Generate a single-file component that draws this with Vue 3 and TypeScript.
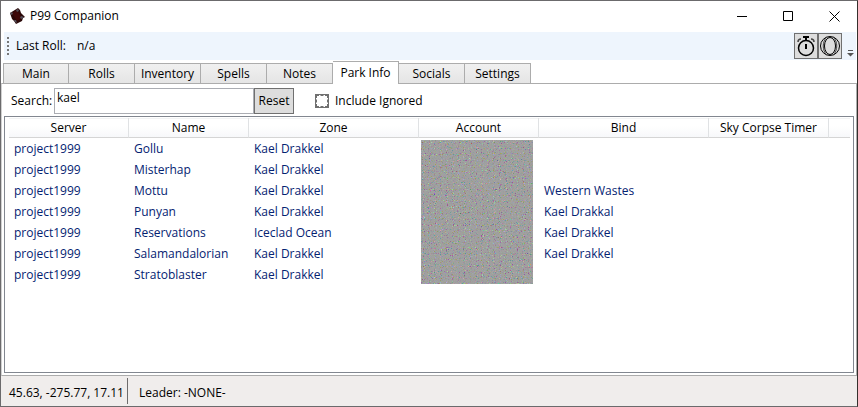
<script setup lang="ts">
import { computed, ref } from 'vue'

interface Character {
  server: string
  name: string
  zone: string
  bind: string
}

const tabs = ['Main', 'Rolls', 'Inventory', 'Spells', 'Notes', 'Park Info', 'Socials', 'Settings']
const activeTab = ref('Park Info')
const search = ref('kael')
const includeIgnored = ref(false)

const characters: Character[] = [
  { server: 'project1999', name: 'Gollu', zone: 'Kael Drakkel', bind: '' },
  { server: 'project1999', name: 'Misterhap', zone: 'Kael Drakkel', bind: '' },
  { server: 'project1999', name: 'Mottu', zone: 'Kael Drakkel', bind: 'Western Wastes' },
  { server: 'project1999', name: 'Punyan', zone: 'Kael Drakkel', bind: 'Kael Drakkal' },
  { server: 'project1999', name: 'Reservations', zone: 'Iceclad Ocean', bind: 'Kael Drakkel' },
  { server: 'project1999', name: 'Salamandalorian', zone: 'Kael Drakkel', bind: 'Kael Drakkel' },
  { server: 'project1999', name: 'Stratoblaster', zone: 'Kael Drakkel', bind: '' },
]

const rows = computed(() => {
  const term = search.value.toLowerCase()
  return characters.filter((c) => `${c.name} ${c.zone} ${c.bind}`.toLowerCase().includes(term))
})
</script>

<template>
  <div class="window">
    <header class="titlebar">
      <svg class="app-icon" width="16" height="16" viewBox="0 0 16 16" aria-hidden="true">
        <path d="M1 5 9 0l2 2 1 3 4 4-2 1-1 3-6 3-2-3-2-2-1-3z" fill="#2a0808" />
        <path d="M3 5 8 2l5 8-5 3z" fill="#3e0808" />
        <path d="M1 5l2-1 1 2-2 1zM8 1l2 1-1 2-2-1zM12 8l3 1-2 2-2-1zM5 12l2 0 1 3-2-1z" fill="#55505a" />
      </svg>
      <h1 class="title">P99 Companion</h1>
      <div class="captions">
        <button type="button" class="caption" aria-label="Minimize">
          <svg width="11" height="11" viewBox="0 0 11 11"><path d="M0 5.5h10" /></svg>
        </button>
        <button type="button" class="caption" aria-label="Maximize">
          <svg width="11" height="11" viewBox="0 0 11 11"><path d="M.5.5h9v9h-9z" /></svg>
        </button>
        <button type="button" class="caption" aria-label="Close">
          <svg width="11" height="11" viewBox="0 0 11 11"><path d="M.5.5l10 10M10.5.5l-10 10" /></svg>
        </button>
      </div>
    </header>

    <div class="toolbar">
      <span class="grip"></span>
      <span class="roll-label">Last Roll:</span>
      <span>n/a</span>
      <div class="tools">
        <button type="button" class="tool" aria-label="Timer">
          <svg width="22" height="24" viewBox="0 0 22 24" fill="none" stroke="#000">
            <circle cx="11" cy="14" r="7.5" stroke-width="1.5" />
            <path d="M8 3h6" stroke-width="2" />
            <path d="M11 3v4M11 10v5" stroke-width="2" />
            <path d="M3 8c0-2 1-3 3-3M19 8c0-2-1-3-3-3" stroke="#444" stroke-width="1.5" />
          </svg>
        </button>
        <button type="button" class="tool" aria-label="Ring">
          <svg width="22" height="24" viewBox="0 0 22 24" fill="none" stroke="#000">
            <circle cx="11" cy="12" r="9.5" />
            <ellipse cx="11" cy="12" rx="5.5" ry="8.5" />
            <path d="M8 3C3 7 3 17 8 21M14 3c5 4 5 14 0 18" stroke="#444" />
          </svg>
        </button>
      </div>
      <svg class="overflow" width="7" height="7" viewBox="0 0 7 7" aria-hidden="true">
        <path d="M1 .5h5" stroke="#555" />
        <path d="M0 3h7L3.5 6.5z" fill="#555" />
      </svg>
    </div>

    <nav class="tabs" role="tablist">
      <button
        v-for="tab in tabs"
        :key="tab"
        type="button"
        role="tab"
        class="tab"
        :class="{ active: tab === activeTab }"
        :aria-selected="tab === activeTab"
        @click="activeTab = tab"
      >{{ tab }}</button>
    </nav>

    <main class="panel">
      <div class="filters">
        <label for="search" class="search-label">Search:</label>
        <input id="search" v-model="search" class="search" type="text" />
        <button type="button" class="reset" @click="search = ''">Reset</button>
        <label class="ignored">
          <input v-model="includeIgnored" type="checkbox" class="check" />
          Include Ignored
        </label>
      </div>

      <div class="list">
        <table class="grid">
          <colgroup>
            <col class="c120" /><col class="c120" /><col class="c170" /><col class="c120" />
            <col class="c170" /><col class="c120" /><col />
          </colgroup>
          <thead>
            <tr>
              <th>Server</th>
              <th>Name</th>
              <th>Zone</th>
              <th>Account</th>
              <th>Bind</th>
              <th>Sky Corpse Timer</th>
              <th></th>
            </tr>
          </thead>
          <tbody>
            <tr v-for="(row, i) in rows" :key="row.name">
              <td>{{ row.server }}</td>
              <td>{{ row.name }}</td>
              <td>{{ row.zone }}</td>
              <td v-if="i === 0" class="masked" :rowspan="rows.length">
                <svg class="noise" aria-hidden="true">
                  <filter id="grain" x="0" y="0" width="100%" height="100%" color-interpolation-filters="sRGB">
                    <feTurbulence type="fractalNoise" baseFrequency="0.83" numOctaves="3" seed="7" />
                    <feColorMatrix values="1 0 0 0 0  0 1 0 0 0  0 0 1 0 0  0 0 0 0 1" />
                    <feComponentTransfer>
                      <feFuncR type="table" tableValues="0.3 0.3 0.35 0.55 0.62 0.63 0.63 0.66 0.8 0.9 0.9" />
                      <feFuncG type="table" tableValues="0.3 0.3 0.35 0.55 0.62 0.63 0.63 0.66 0.8 0.9 0.9" />
                      <feFuncB type="table" tableValues="0.3 0.3 0.35 0.55 0.62 0.63 0.63 0.66 0.8 0.9 0.9" />
                    </feComponentTransfer>
                  </filter>
                  <rect width="100%" height="100%" filter="url(#grain)" />
                </svg>
              </td>
              <td>{{ row.bind }}</td>
              <td></td>
              <td></td>
            </tr>
          </tbody>
        </table>
      </div>
    </main>

    <footer class="status">
      <span class="coords">45.63, -275.77, 17.11</span>
      <span class="leader">Leader: -NONE-</span>
    </footer>
  </div>
</template>

<style>
body {
  background: #fff;
}
</style>

<style scoped>
.window {
  box-sizing: border-box;
  display: flex;
  flex-direction: column;
  min-height: 100vh;
  border: 1px solid #6b6a6c;
  border-right-color: #35302d;
  background: #fff;
  color: #000;
  font-family: 'Segoe UI', 'Open Sans', 'Noto Sans', sans-serif;
  font-size: 12px;
  line-height: 16px;
}
button,
input {
  box-sizing: border-box;
  margin: 0;
  font: inherit;
  color: inherit;
}
.titlebar {
  display: flex;
  align-items: center;
  height: 30px;
  padding: 0 0 1px 8px;
}
.app-icon {
  margin-right: 5px;
}
.title {
  margin: 0;
  font-size: 12px;
  font-weight: 400;
}
.captions {
  display: flex;
  margin-left: auto;
}
.caption {
  display: grid;
  place-items: center;
  width: 46px;
  height: 28px;
  padding: 0;
  border: 0;
  background: none;
}
.caption svg {
  fill: none;
  stroke: #000;
}
.toolbar {
  display: flex;
  align-items: center;
  height: 28px;
  margin: 0 1px 0 3px;
  background: #eef5fd;
}
.grip {
  width: 2px;
  height: 18px;
  margin: 0 7px 0 3px;
  background: repeating-linear-gradient(#777 0 2px, transparent 2px 4px);
}
.roll-label {
  margin-right: 11px;
}
.tools {
  display: flex;
  margin-left: auto;
}
.tool {
  width: 24px;
  height: 26px;
  padding: 0;
  border: 1px solid #707070;
  background: #ddd;
}
.tool svg {
  display: block;
}
.overflow {
  align-self: flex-end;
  margin: 0 2px 3px 5px;
}
.tabs {
  display: flex;
  align-items: flex-end;
  height: 23px;
  padding-left: 2px;
}
.tab {
  width: 66px;
  height: 20px;
  padding: 0;
  border: solid #acacac;
  border-width: 1px 1px 0 0;
  background: linear-gradient(#f0f0f0, #e5e5e5);
  white-space: nowrap;
}
.tab:first-child {
  border-left-width: 1px;
}
.tab.active {
  position: relative;
  height: 23px;
  margin-bottom: -1px;
  background: #fff;
}
.panel {
  flex: 1;
  display: flex;
  flex-direction: column;
  padding: 4px 2px 2px;
  border: 1px solid #acacac;
  border-left-color: #d0d0d0;
}
.filters {
  display: flex;
  align-items: center;
  height: 26px;
  padding-left: 7px;
}
.search-label {
  width: 43px;
}
.search {
  width: 200px;
  height: 26px;
  padding: 0 2px 8px;
  border: 1px solid #abadb3;
  background: #fff;
}
.reset {
  width: 40px;
  height: 26px;
  padding: 0;
  border: 1px solid #707070;
  background: #ddd;
}
.ignored {
  display: flex;
  align-items: center;
  gap: 6px;
  margin-left: 21px;
}
.check {
  appearance: none;
  width: 14px;
  height: 14px;
  border: 1px solid #707070;
  background: #fff;
  outline: 1px dashed #707070;
  outline-offset: -2px;
}
.check:checked {
  background: #444;
}
.list {
  flex: 1;
  margin-top: 2px;
  padding: 1px 3px 1px 4px;
  border: 1px solid #828790;
}
.grid {
  width: 100%;
  table-layout: fixed;
  border-collapse: separate;
  border-spacing: 0;
}
.c120 {
  width: 120px;
}
.c170 {
  width: 170px;
}
th {
  box-sizing: border-box;
  height: 20px;
  padding: 1px 0 0;
  border-right: 1px solid #e0e2e4;
  border-bottom: 1px solid #d5d5d5;
  background: linear-gradient(#f2f3f4 0 1px, #fff 1px 8px, #f7f8fa);
  font-weight: 400;
  white-space: nowrap;
}
th:last-child {
  border-right: 0;
}
td {
  box-sizing: border-box;
  height: 21px;
  padding: 1px 5px 0;
  color: #042271;
  white-space: nowrap;
}
.masked {
  padding: 2px 6px 1px 2px;
  vertical-align: top;
}
.noise {
  display: block;
  width: 100%;
  height: 144px;
  background: #999;
}
.status {
  display: flex;
  align-items: center;
  height: 30px;
  padding-left: 8px;
  background: #f0edec;
}
.status span {
  box-sizing: border-box;
  height: 26px;
  padding-top: 7px;
}
.coords {
  width: 119px;
  border-right: 1px solid #6e6c6c;
}
.leader {
  margin-left: 11px;
}
</style>
